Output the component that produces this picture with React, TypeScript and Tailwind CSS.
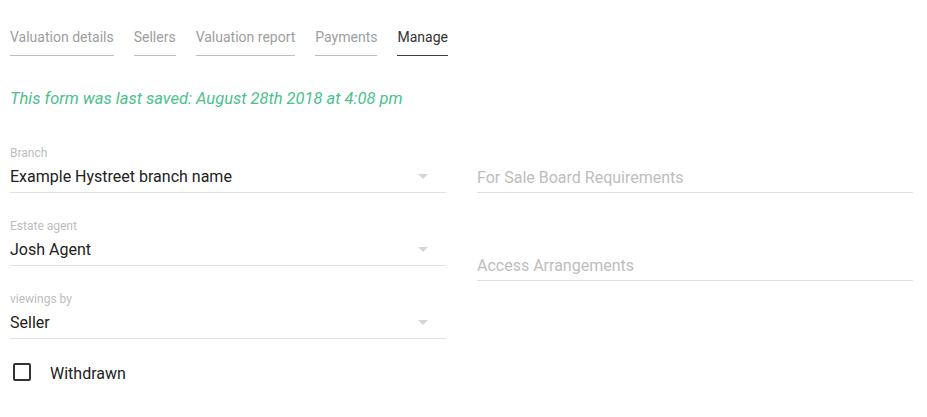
const tabs = [
  { label: "Valuation details", active: false },
  { label: "Sellers", active: false },
  { label: "Valuation report", active: false },
  { label: "Payments", active: false },
  { label: "Manage", active: true },
];

const selects = [
  { label: "Branch", value: "Example Hystreet branch name" },
  { label: "Estate agent", value: "Josh Agent" },
  { label: "viewings by", value: "Seller" },
];

export default function App() {
  return (
    <div className="min-h-[417px] bg-white pl-[10px] pr-[14px] font-['Roboto',sans-serif]">
      {/* Tabs */}
      <div className="flex gap-[20px] pt-[27px]">
        {tabs.map((t) => (
          <div
            key={t.label}
            className={
              t.active
                ? "border-b border-[#3a3a48] pb-[8px] text-[14px] leading-[20px] text-[#333333]"
                : "border-b border-[#bdbdbd] pb-[8px] text-[14px] leading-[20px] text-[#9e9e9e]"
            }
          >
            {t.label}
          </div>
        ))}
      </div>

      <p className="mt-[31px] text-[16.5px] italic leading-[24px] text-[#4cbf8e]">
        This form was last saved: August 28th 2018 at 4:08 pm
      </p>

      <div className="mt-[34px] grid grid-cols-2 gap-x-[31px]">
        {/* Left column */}
        <div className="flex flex-col gap-[25px]">
          {selects.map((s) => (
            <SelectField key={s.label} label={s.label} value={s.value} />
          ))}
        </div>

        {/* Right column */}
        <div className="flex flex-col">
          <TextField placeholder="For Sale Board Requirements" className="mt-[21px]" />
          <TextField placeholder="Access Arrangements" className="mt-[61px]" />
        </div>
      </div>

      {/* Checkbox */}
      <label className="mt-[23px] flex items-start">
        <span className="ml-[3px] mt-[1px] h-[18px] w-[18px] rounded-[2px] border-2 border-[#333333]" />
        <span className="ml-[19px] text-[16px] leading-[24px] text-[#212121]">Withdrawn</span>
      </label>
    </div>
  );
}

function SelectField({ label, value }: { label: string; value: string }) {
  return (
    <div>
      <div className="text-[12px] leading-[16px] text-[#bdbdbd]">{label}</div>
      <div className="mt-[4px] flex items-center border-b border-[#e0e0e0] pb-[3px]">
        <span className="flex-1 text-[16px] leading-[24px] text-[#212121]">{value}</span>
        <svg width="10" height="5" viewBox="0 0 10 5" className="mr-[18px] -mt-[2px]">
          <path d="M0 0 L10 0 L5 5 Z" fill="#d6d6d6" />
        </svg>
      </div>
    </div>
  );
}

function TextField({ placeholder, className }: { placeholder: string; className?: string }) {
  return (
    <div className={`border-b border-[#e0e0e0] pb-[2px] ${className ?? ""}`}>
      <div className="text-[16px] leading-[24px] text-[#bdbdbd]">{placeholder}</div>
    </div>
  );
}
